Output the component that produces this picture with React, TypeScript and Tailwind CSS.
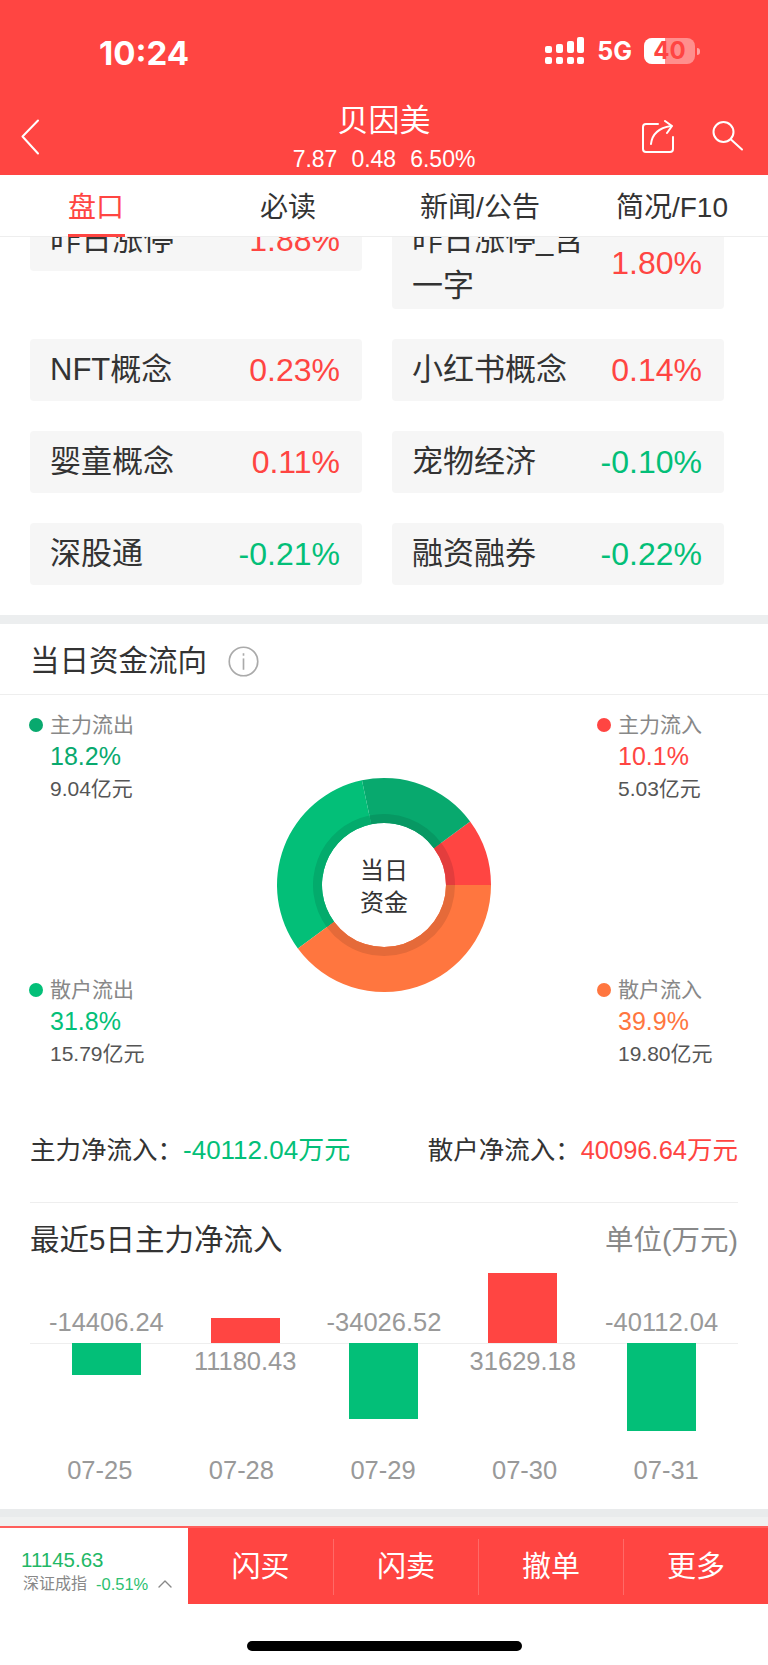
import React from 'react'
import { ChevronUp } from 'lucide-react'

const CJK = 'font-["Liberation_Sans","Noto_Sans_CJK_SC",sans-serif]'

const rows = [
  { name: '昨日涨停', pct: '1.88%', up: true },
  { name: '昨日涨停_含一字', pct: '1.80%', up: true },
  { name: 'NFT概念', pct: '0.23%', up: true },
  { name: '小红书概念', pct: '0.14%', up: true },
  { name: '婴童概念', pct: '0.11%', up: true },
  { name: '宠物经济', pct: '-0.10%', up: false },
  { name: '深股通', pct: '-0.21%', up: false },
  { name: '融资融券', pct: '-0.22%', up: false },
]

const bars = [
  { label: '-14406.24', h: 32, up: false },
  { label: '11180.43', h: 25, up: true },
  { label: '-34026.52', h: 76, up: false },
  { label: '31629.18', h: 70, up: true },
  { label: '-40112.04', h: 88, up: false },
]

const dates = ['07-25', '07-28', '07-29', '07-30', '07-31']

const polar = (r: number, deg: number) => {
  const a = (deg * Math.PI) / 180
  return `${(110 + r * Math.cos(a)).toFixed(2)} ${(110 - r * Math.sin(a)).toFixed(2)}`
}

const slice = (from: number, to: number, outer: number, inner: number) => {
  const large = to - from > 180 ? 1 : 0
  return `M${polar(outer, from)} A${outer} ${outer} 0 ${large} 0 ${polar(outer, to)} L${polar(inner, to)} A${inner} ${inner} 0 ${large} 1 ${polar(inner, from)} Z`
}

const Donut = () => (
  <svg width="220" height="220" viewBox="0 0 220 220">
    <path d={slice(0, 36.4, 107, 62)} fill="#ff4542" />
    <path d={slice(36.4, 101.9, 107, 62)} fill="#08a96e" />
    <path d={slice(101.9, 216.4, 107, 62)} fill="#03bf78" />
    <path d={slice(216.4, 360, 107, 62)} fill="#ff763f" />
    <path d={slice(0, 36.4, 71, 62)} fill="#e33d3d" />
    <path d={slice(36.4, 101.9, 71, 62)} fill="#079863" />
    <path d={slice(101.9, 216.4, 71, 62)} fill="#03ab6c" />
    <path d={slice(216.4, 360, 71, 62)} fill="#e56a39" />
  </svg>
)

const StatusBar = () => (
  <div className="flex h-[90px] items-center justify-between pt-[16px] text-white">
    <span className="ml-[99px] font-['Inter',sans-serif] text-[33px] leading-[36px] font-bold">10:24</span>
    <div className="mr-[68px] mb-[4px] flex items-center">
      <svg width="40" height="28" viewBox="0 0 40 28" fill="#fff" className="mr-[12px]">
        <rect x="0" y="9" width="7" height="7" rx="2" />
        <rect x="11" y="7" width="7" height="9" rx="2" />
        <rect x="22" y="4" width="7" height="12" rx="2" />
        <rect x="32" y="0" width="7" height="16" rx="2" />
        <rect x="0" y="20" width="7" height="7" rx="2" />
        <rect x="11" y="20" width="7" height="7" rx="2" />
        <rect x="22" y="20" width="7" height="7" rx="2" />
        <rect x="32" y="20" width="7" height="7" rx="2" />
      </svg>
      <span className="mr-[12px] font-['Inter',sans-serif] text-[25px] leading-[28px] font-bold">5G</span>
      <div className="relative flex h-[26px] w-[51px] items-center justify-center rounded-[8px] bg-white/40 font-['Inter',sans-serif] text-[24px] leading-[26px] font-bold text-[#ff4542]">
        <div className="absolute inset-y-0 left-0 w-[21px] rounded-l-[8px] bg-white" />
        <span className="relative">40</span>
      </div>
      <div className="ml-[2px] h-[7px] w-[3px] rounded-r-full bg-white/50" />
    </div>
  </div>
)

const NavBar = () => (
  <div className="relative h-[85px] text-center text-white">
    <div className="pt-[14px] text-[31px] leading-[34px]">贝因美</div>
    <div className="mt-[7px] flex justify-center gap-[14px] text-[23px] leading-[28px]">
      <span>7.87</span>
      <span>0.48</span>
      <span>6.50%</span>
    </div>
    <svg className="absolute top-[29px] left-[20px]" width="20" height="36" viewBox="0 0 20 36" fill="none" stroke="#fff" strokeWidth="2" strokeLinecap="round" strokeLinejoin="round">
      <path d="M18 1.5L2.5 17.5L18 34.5" />
    </svg>
    <svg className="absolute top-[30px] left-[641px]" width="34" height="34" viewBox="0 0 34 34" fill="none" stroke="#fff" strokeWidth="2" strokeLinecap="round" strokeLinejoin="round">
      <path d="M17 4H5a3 3 0 0 0-3 3v22a3 3 0 0 0 3 3h24a3 3 0 0 0 3-3V17" />
      <path d="M10 24C11 15 17 8 30 6" />
      <path d="M24 1l7 5-5 7" />
    </svg>
    <svg className="absolute top-[29px] left-[711px]" width="34" height="34" viewBox="0 0 34 34" fill="none" stroke="#fff" strokeWidth="2" strokeLinecap="round">
      <circle cx="12.5" cy="13" r="10" />
      <path d="M20 20.5l11 10" />
    </svg>
  </div>
)

const Tabs = () => (
  <div className="relative z-10 grid h-[62px] grid-cols-4 border-b border-[#eeeeee] bg-white text-center text-[28px] leading-[66px] text-[#333333]">
    <div className="text-[#ff4542]">
      <span className="relative inline-block">
        盘口
        <span className="absolute bottom-[4px] left-0 h-[3px] w-[57px] bg-[#ff4542]" />
      </span>
    </div>
    <div>必读</div>
    <div>新闻/公告</div>
    <div>简况/F10</div>
  </div>
)

const Legend = ({ color, name, pct, money }: { color: string; name: string; pct: string; money: string }) => (
  <div className="whitespace-nowrap">
    <div className="flex h-[24px] items-center">
      <span className="mr-[7px] h-[14px] w-[14px] shrink-0 rounded-full" style={{ backgroundColor: color }} />
      <span className="text-[21px] leading-[24px] text-[#888888]">{name}</span>
    </div>
    <div className="mt-[4px] pl-[21px] text-[25px] leading-[30px]" style={{ color }}>
      {pct}
    </div>
    <div className="mt-[3px] pl-[21px] text-[21px] leading-[30px] text-[#555555]">{money}</div>
  </div>
)

export default function App() {
  return (
    <div className={`relative h-[1665px] w-[768px] overflow-hidden bg-white ${CJK}`}>
      <div className="bg-[#ff4542]">
        <StatusBar />
        <NavBar />
      </div>
      <Tabs />

      <div className="-mt-[28px] grid grid-cols-2 items-start gap-x-[30px] gap-y-[30px] pr-[44px] pl-[30px]">
        {rows.map((c) => (
          <div key={c.name} className="min-h-[62px] rounded-[4px] bg-[#f6f6f6] pt-[8px] pr-[22px] pl-[20px] text-[31px] leading-[46px]">
            <div className="flex items-center justify-between">
              <span className={c.name.length > 6 ? 'w-[190px] text-[#333333]' : 'text-[#333333]'}>{c.name}</span>
              <span className={`text-[32px] ${c.up ? 'text-[#ff4542]' : 'text-[#03bf78]'}`}>{c.pct}</span>
            </div>
          </div>
        ))}
      </div>

      <div className="mt-[30px] h-[9px] bg-[#eceeef]" />

      <div className="flex h-[71px] items-center border-b border-[#eeeeee] pt-[5px] pl-[30px]">
        <span className="text-[29.5px] text-[#333333]">当日资金流向</span>
        <svg className="ml-[21px]" width="31" height="31" viewBox="0 0 30 30" fill="none" stroke="#aaaaaa" strokeWidth="1.6">
          <circle cx="15" cy="15" r="13.8" />
          <path d="M15 12v11" />
          <path d="M15 7v2.4" />
        </svg>
      </div>

      <div className="relative h-[436px] pt-[18px]">
        <div className="flex justify-between pl-[29px]">
          <Legend color="#08a96e" name="主力流出" pct="18.2%" money="9.04亿元" />
          <div className="w-[171px]">
            <Legend color="#ff4542" name="主力流入" pct="10.1%" money="5.03亿元" />
          </div>
        </div>
        <div className="mt-[174px] flex justify-between pl-[29px]">
          <Legend color="#03bf78" name="散户流出" pct="31.8%" money="15.79亿元" />
          <div className="w-[171px]">
            <Legend color="#ff763f" name="散户流入" pct="39.9%" money="19.80亿元" />
          </div>
        </div>

        <div className="absolute top-[80px] left-[274px] h-[220px] w-[220px]">
          <Donut />
          <div className="absolute inset-0 flex flex-col items-center justify-center pt-[4px] text-[24px] leading-[32px] text-[#333333]">
            <span>当日</span>
            <span>资金</span>
          </div>
        </div>
      </div>

      <div className="mx-[30px] flex h-[72px] items-start justify-between border-b border-[#eeeeee] text-[25.5px] leading-[38px] text-[#333333]">
        <div>
          主力净流入：<span className="text-[26px] text-[#03bf78]">-40112.04万元</span>
        </div>
        <div>
          散户净流入：<span className="text-[#ff4542]">40096.64万元</span>
        </div>
      </div>

      <div className="mx-[30px] mt-[19px] flex items-center justify-between">
        <span className="text-[29.5px] leading-[36px] text-[#333333]">最近5日主力净流入</span>
        <span className="text-[28.5px] leading-[36px] text-[#888888]">单位(万元)</span>
      </div>

      <div className="relative mx-[30px] mt-[15px] h-[160px]">
        <div className="absolute inset-x-0 top-[70px] h-[1px] bg-[#eeeeee]" />
        <div className="mx-[7px] grid h-full grid-cols-5 text-[25.5px] leading-[30px] text-[#999999]">
          {bars.map((b) => (
            <div key={b.label} className="relative flex justify-center">
              <div
                className={`absolute w-[69px] ${b.up ? 'bottom-[90px] bg-[#ff4542]' : 'top-[70px] bg-[#03bf78]'}`}
                style={{ height: b.h }}
              />
              <span className={`absolute whitespace-nowrap ${b.up ? 'top-[73px]' : 'top-[34px]'}`}>{b.label}</span>
            </div>
          ))}
        </div>
      </div>

      <div className="mr-[31px] ml-[29px] mt-[22px] grid grid-cols-5 text-center text-[25.5px] leading-[30px] text-[#999999]">
        {dates.map((d) => (
          <span key={d}>{d}</span>
        ))}
      </div>

      <div className="absolute inset-x-0 top-[1509px] h-[17px] bg-[#f0f1f1]">
        <div className="h-[8px] bg-[#e9ebec]" />
      </div>

      <div className="absolute inset-x-0 top-[1526px] flex h-[78px] border-t-2 border-[#ff5f5c]">
        <div className="w-[188px] bg-white pt-[20px] pl-[21px]">
          <div className="text-[20.5px] leading-[24px] text-[#1fb866]">11145.63</div>
          <div className="flex items-center pl-[2px] text-[16px] leading-[20px]">
            <span className="text-[#888888]">深证成指</span>
            <span className="ml-[9px] text-[16.5px] text-[#2cc070]">-0.51%</span>
            <ChevronUp className="ml-[5px] text-[#888888]" size={24} strokeWidth={1.4} />
          </div>
        </div>
        <div className="grid flex-1 grid-cols-4 items-center bg-[#ff4542] pt-[2px] text-center text-[29px] leading-[56px] text-white">
          <div>闪买</div>
          <div className="border-l border-white/20">闪卖</div>
          <div className="border-l border-white/20">撤单</div>
          <div className="border-l border-white/20">更多</div>
        </div>
      </div>

      <div className="absolute top-[1641px] left-[247px] h-[10px] w-[275px] rounded-full bg-black" />
    </div>
  )
}
